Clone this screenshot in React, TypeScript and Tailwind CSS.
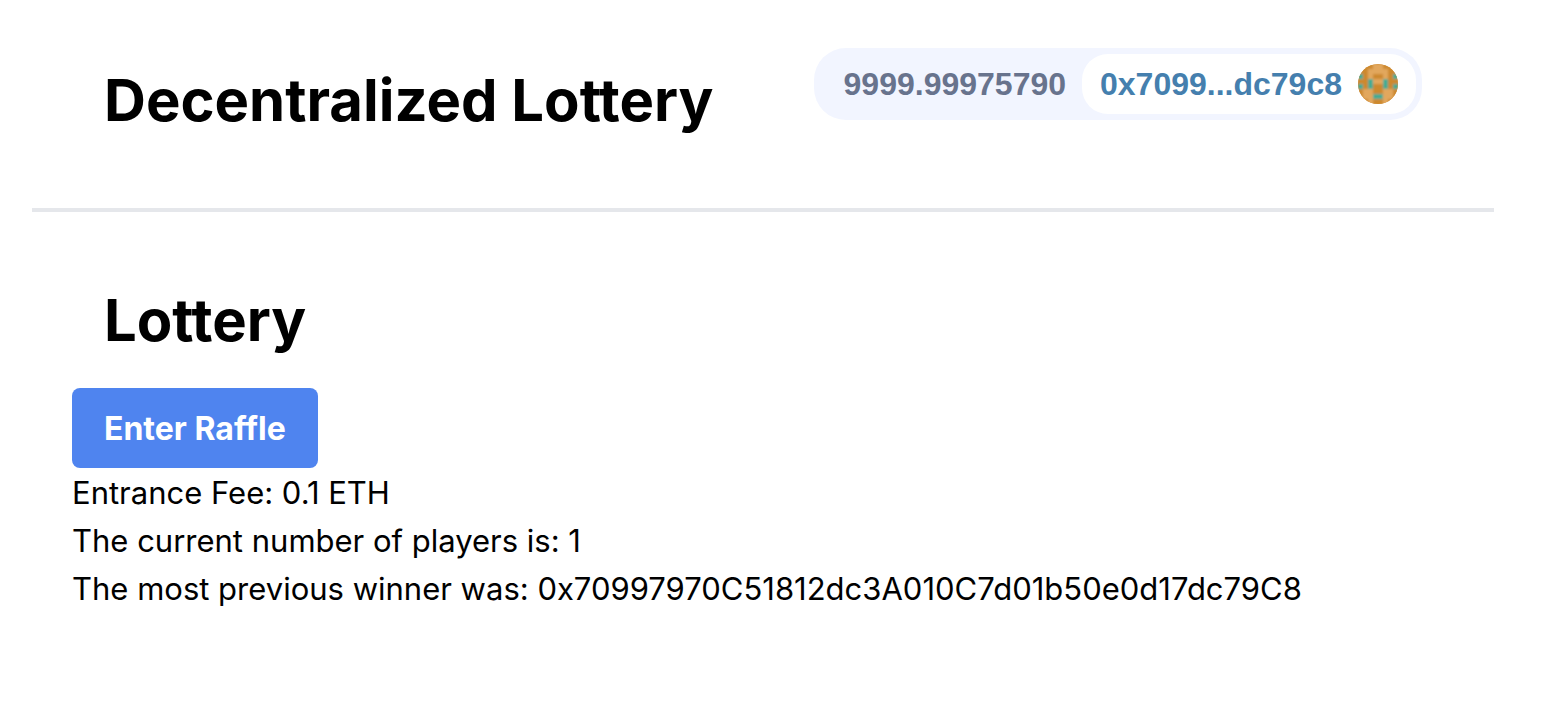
const palette: Record<string, string> = { d: "#cd892e", l: "#e2a75d", t: "#44ab93" };

const avatarRows = [
  "dddllddd",
  "ddlllldd",
  "tdlddldt",
  "ddtlltdd",
  "tdtddtdt",
  "dllddlld",
  "dllttlld",
  "ddlddldd",
];

function Avatar() {
  return (
    <svg className="size-10 rounded-full" viewBox="0 0 40 40" aria-hidden="true">
      <filter id="soften" x="-0.1" y="-0.1" width="1.2" height="1.2">
        <feGaussianBlur stdDeviation="0.8" />
      </filter>
      <rect width="40" height="40" fill={palette.d} />
      <g filter="url(#soften)" shapeRendering="crispEdges">
        {avatarRows.map((row, y) =>
          row.split("").map((cell, x) => (
            <rect key={`${x}-${y}`} x={x * 5} y={y * 5} width="5" height="5" fill={palette[cell]} />
          ))
        )}
      </g>
    </svg>
  );
}

export default function App() {
  return (
    <div className="min-h-screen bg-white pl-8 pr-14 font-['Inter',sans-serif] text-[31px] leading-[48px] text-black">
      <header className="flex items-start justify-between border-b-4 border-gray-200 px-[72px] pt-12 pb-14">
        <h1 className="py-4 text-[58px] font-bold leading-[72px]">Decentralized Lottery</h1>
        <div className="flex h-[72px] items-center rounded-[32px] bg-[#f2f5ff] pl-[30px] pr-[6px] font-['Liberation_Sans',sans-serif] text-[32px] font-bold">
          <span className="mr-4 text-[#68738d]">9999.99975790</span>
          <button className="flex h-[60px] items-center gap-4 rounded-[26px] bg-white px-[18px] text-[#457fae]">
            0x7099...dc79c8
            <Avatar />
          </button>
        </div>
      </header>
      <main className="px-10 pt-[72px]">
        <h2 className="px-8 pb-8 text-[58px] font-bold leading-[72px]">Lottery</h2>
        <button className="block h-20 rounded-lg bg-[#4f84ef] px-8 pt-[2px] text-[32px] font-bold text-white">
          Enter Raffle
        </button>
        <div className="pt-px">
          <p>Entrance Fee: 0.1 ETH</p>
          <p>The current number of players is: 1</p>
          <p>The most previous winner was: 0x70997970C51812dc3A010C7d01b50e0d17dc79C8</p>
        </div>
      </main>
    </div>
  );
}
